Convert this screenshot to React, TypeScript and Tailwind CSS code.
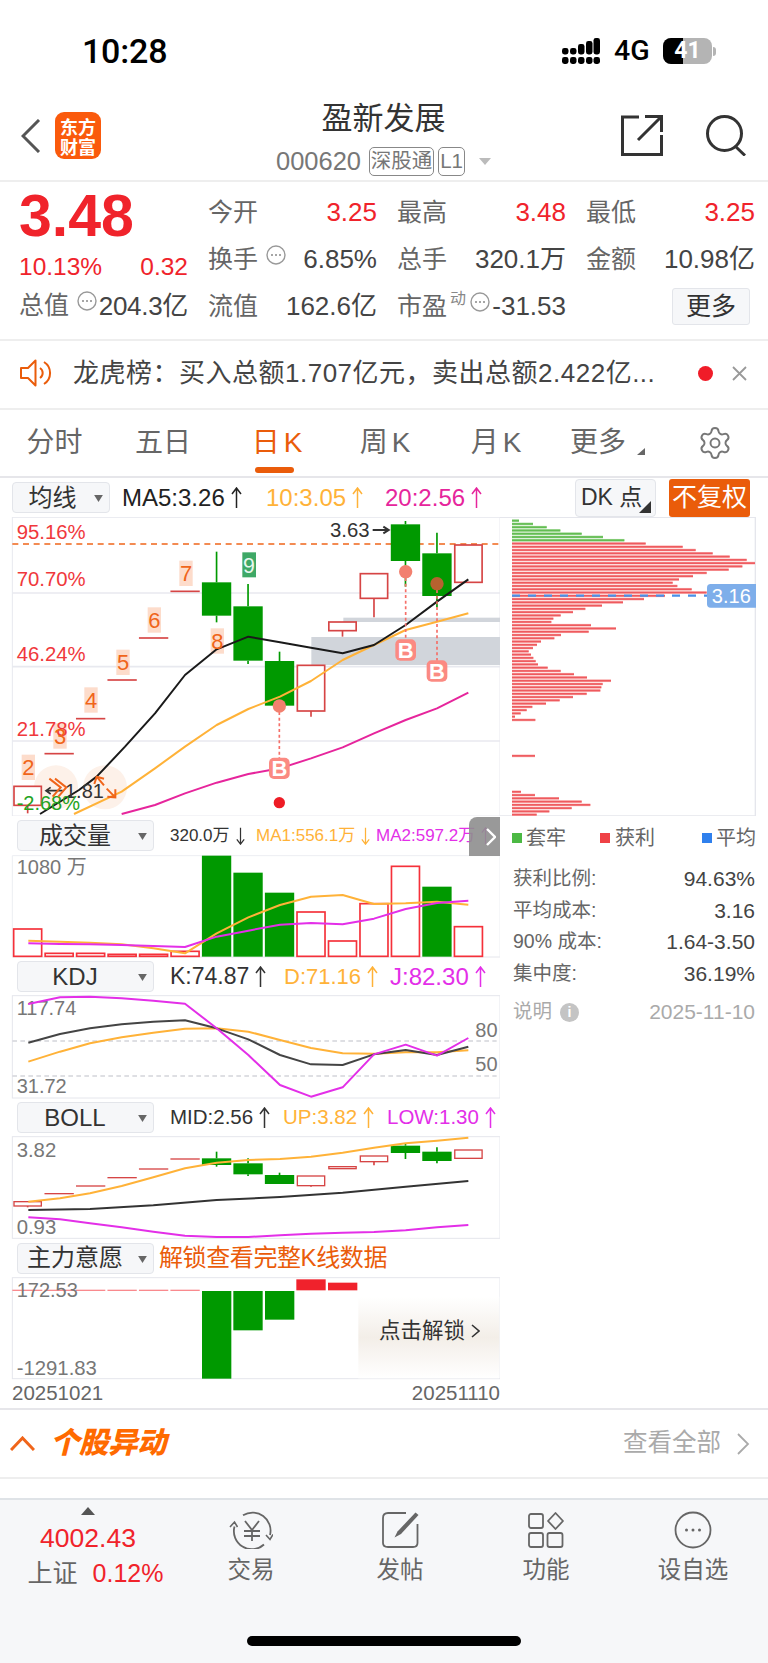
import React from 'react'
import { Settings } from 'lucide-react'

// all chart data is in 3x units: 3 svg units = 1 page pixel
const cx = (i: number) => 83 + 94.45 * i
const poly = (p: number[][]) => p.map((a) => a.join(',')).join(' ')

const RED = '#d64545'
const GREEN = '#009900'
const ORANGE = '#ffb238'
const MAGENTA = '#e32fe8'
const PINK = '#e6259c'

type Candle = { up: boolean; top: number; bottom: number; hi?: number; lo?: number }

const mainCandles: Candle[] = [
    { up: true, top: 829, bottom: 886, lo: 910 },
    { up: true, top: 731, bottom: 731 },
    { up: true, top: 626, bottom: 626 },
    { up: true, top: 510, bottom: 510 },
    { up: true, top: 384, bottom: 384 },
    { up: true, top: 244, bottom: 244 },
    { up: false, top: 217, bottom: 317, hi: 125, lo: 337 },
    { up: false, top: 289, bottom: 452, hi: 222, lo: 462 },
    { up: false, top: 453, bottom: 587, hi: 425 },
    { up: true, top: 466, bottom: 603, lo: 620 },
    { up: true, top: 336, bottom: 362, lo: 380 },
    { up: true, top: 191, bottom: 265, lo: 322 },
    { up: false, top: 43, bottom: 153, hi: 33, lo: 230 },
    { up: false, top: 130, bottom: 258, hi: 68, lo: 292 },
    { up: true, top: 105, bottom: 217 },
]

const bollCandles: Candle[] = [
    { up: true, top: 305, bottom: 318, lo: 322 },
    { up: true, top: 281, bottom: 281 },
    { up: true, top: 258, bottom: 258 },
    { up: true, top: 233, bottom: 233 },
    { up: true, top: 207, bottom: 207 },
    { up: true, top: 177, bottom: 177 },
    { up: false, top: 175, bottom: 195, hi: 155, lo: 200 },
    { up: false, top: 190, bottom: 223, hi: 175, lo: 228 },
    { up: false, top: 225, bottom: 252, hi: 218 },
    { up: true, top: 228, bottom: 257, lo: 260 },
    { up: true, top: 200, bottom: 206 },
    { up: true, top: 168, bottom: 185, lo: 196 },
    { up: false, top: 137, bottom: 159, hi: 132, lo: 177 },
    { up: false, top: 155, bottom: 183, hi: 142, lo: 190 },
    { up: true, top: 150, bottom: 175 },
]

const chipWidths = [
    57, 99, 140, 181, 245, 309, 373, 437, 548, 587, 638, 689, 740, 765, 727, 686, 620, 579, 537, 518, 532, 575, 620,
    495, 432, 369, 306, 256, 219, 182, 160, 154, 273, 348, 266, 183, 163, 123, 111, 99, 86, 93, 100, 107, 114, 143,
    182, 222, 261, 333, 308, 304, 301, 260, 219, 179, 138, 97, 80, 62, 45, 106,
]
const chipLow: Record<number, number> = { 72: 105, 83: 63, 84: 105, 85: 177, 86: 245, 87: 271, 88: 215, 89: 148, 90: 110 }

const volTops = [357, 430, 430, 433, 433, 424, 137, 188, 248, 306, 393, 281, 169, 230, 350]

function Candles({ data, width = 5 }: { data: Candle[]; width?: number }) {
    return (
        <>
            {data.map((c, i) => {
                const x = cx(i)
                const color = c.up ? RED : GREEN
                return (
                    <g key={i}>
                        {c.hi !== undefined && <line x1={x} x2={x} y1={c.hi} y2={c.top} stroke={color} strokeWidth={5} />}
                        {c.lo !== undefined && <line x1={x} x2={x} y1={c.bottom} y2={c.lo} stroke={color} strokeWidth={5} />}
                        {c.top === c.bottom ? (
                            <line x1={x - 44} x2={x + 44} y1={c.top} y2={c.top} stroke={color} strokeWidth={width} />
                        ) : c.up ? (
                            <rect x={x - 41} y={c.top} width={82} height={c.bottom - c.top} fill="#fff" stroke={color} strokeWidth={width} />
                        ) : (
                            <rect x={x - 44} y={c.top} width={88} height={c.bottom - c.top} fill={color} />
                        )}
                    </g>
                )
            })}
        </>
    )
}

function Line({ p, color, width = 6 }: { p: number[][]; color: string; width?: number }) {
    return <polyline points={poly(p)} fill="none" stroke={color} strokeWidth={width} strokeLinejoin="round" />
}

function BTag({ x, y }: { x: number; y: number }) {
    return (
        <g>
            <rect x={x - 31} y={y - 32} width={62} height={64} rx={15} fill="#fb8a82" />
            <text x={x} y={y + 24} textAnchor="middle" fontSize={66} fontWeight={700} fill="#fff">B</text>
        </g>
    )
}

function MainChart() {
    const labels = [
        [85, 772, '2'], [180, 678, '3'], [273, 570, '4'], [369, 457, '5'], [463, 330, '6'], [558, 190, '7'], [652, 393, '8'],
    ] as [number, number, string][]
    return (
        <svg viewBox="0 21 1500 897" className="block w-[500px] h-[299px]">
            <rect x={37} y={22} width={1463} height={896} fill="none" stroke="#e8e9ef" strokeWidth={3} />
            {[249, 470, 693].map((y) => (
                <line key={y} x1={37} x2={1500} y1={y} y2={y} stroke="#e8e9ef" strokeWidth={5} />
            ))}
            <rect x={934} y={381} width={566} height={84} fill="#d1d5db" />
            <rect x={1030} y={323} width={470} height={13} fill="#d1d5db" />
            <line x1={37} x2={1500} y1={102} y2={102} stroke="#f0651a" strokeWidth={5} strokeDasharray="18 14" />

            <circle cx={168} cy={832} r={66} fill="#fdf1e9" />
            <circle cx={315} cy={832} r={66} fill="#fdf1e9" />
            {labels.map(([x, y, t]) => (
                <g key={t}>
                    <rect x={x - 20} y={y - 38} width={40} height={76} fill="#fddccb" />
                </g>
            ))}
            <rect x={727} y={127} width={41} height={75} fill="#3ea866" />

            <text x={50} y={87} fontSize={61} fill="#f0383c">95.16%</text>
            <text x={50} y={229} fontSize={61} fill="#f0383c">70.70%</text>
            <text x={50} y={453} fontSize={61} fill="#f0383c">46.24%</text>
            <text x={50} y={677} fontSize={61} fill="#f0383c">21.78%</text>

            <Candles data={mainCandles} />

            <Line p={[[222,912],[365,845],[465,775],[555,710],[650,645],[745,597],[840,560],[933,513],[1028,450],[1122,405],[1217,360],[1311,335],[1405,310]]} color={ORANGE} />
            <Line p={[[365,912],[465,885],[555,850],[650,818],[745,792],[840,775],[933,745],[1028,712],[1122,670],[1217,630],[1311,595],[1405,548]]} color={PINK} />
            <Line p={[[120,912],[237,840],[290,800],[375,710],[465,610],[555,495],[650,418],[745,380],[840,397],[933,413],[1028,430],[1122,405],[1217,345],[1311,275],[1405,208]]} color="#1a1a1a" />

            {labels.map(([x, y, t]) => (
                <text key={t} x={x} y={y + 24} textAnchor="middle" fontSize={66} fill="#f0651a">{t}</text>
            ))}
            <text x={747} y={188} textAnchor="middle" fontSize={64} fill="#e8f7ee">9</text>

            <text x={195} y={864} fontSize={60} fill="#333">1.81</text>
            <path d="M188 842 H140 M152 832 L138 842 L152 852" fill="none" stroke="#333" strokeWidth={5} />
            <text x={50} y={900} fontSize={60} fill="#22a322">-2.68%</text>
            <text x={990} y={80} fontSize={61} fill="#333">3.63</text>
            <path d="M1118 60 H1162 M1150 50 L1166 60 L1150 70" fill="none" stroke="#333" strokeWidth={6} />

            <polyline points="148,806 182,832 158,860" fill="none" stroke="#f0651a" strokeWidth={6} />
            <polyline points="165,806 199,832 175,860" fill="none" stroke="#f0651a" strokeWidth={6} />
            <polyline points="283,822 290,800 312,806" fill="none" stroke="#f0651a" strokeWidth={6} />
            <line x1={290} y1={800} x2={312} y2={826} stroke="#f0651a" strokeWidth={6} />
            <polyline points="322,860 346,862 346,838" fill="none" stroke="#f0651a" strokeWidth={6} />
            <line x1={346} y1={862} x2={320} y2={836} stroke="#f0651a" strokeWidth={6} />

            <line x1={1217} x2={1217} y1={204} y2={390} stroke="#f56f68" strokeWidth={5} strokeDasharray="9 8" />
            <line x1={1311} x2={1311} y1={240} y2={452} stroke="#f56f68" strokeWidth={5} strokeDasharray="9 8" />
            <line x1={838} x2={838} y1={606} y2={745} stroke="#f56f68" strokeWidth={5} strokeDasharray="9 8" />
            <circle cx={1217} cy={185} r={20} fill="#f2806f" />
            <circle cx={1311} cy={221} r={20} fill="#b6622f" />
            <circle cx={838} cy={588} r={20} fill="#f2806f" />
            <circle cx={838} cy={878} r={17} fill="#ee1c25" />
            <BTag x={1217} y={420} />
            <BTag x={1311} y={483} />
            <BTag x={838} y={775} />
        </svg>
    )
}

function ChipChart() {
    return (
        <svg viewBox="0 21 804 897" className="block w-[268px] h-[299px]">
            <polyline points="0,22 766,22 766,918 0,918" fill="none" stroke="#e5e6ec" strokeWidth={4} />
            {chipWidths.map((w, i) => {
                const y = 32 + i * 9.8
                return <BarRow key={i} y={y} w={w} green={i < 7} />
            })}
            {Object.entries(chipLow).map(([k, w]) => (
                <BarRow key={k} y={32 + Number(k) * 9.8} w={w} green={false} />
            ))}
            <line x1={36} x2={625} y1={257} y2={257} stroke="#4a90e8" strokeWidth={7} strokeDasharray="24 24" />
            <path d="M 632 222 H 768 V 293 H 632 Q 621 293 621 282 V 233 Q 621 222 632 222 Z" fill="#7eaeea" />
            <text x={694} y={279} textAnchor="middle" fontSize={60} fill="#fff">3.16</text>
        </svg>
    )
}

function BarRow({ y, w, green }: { y: number; w: number; green: boolean }) {
    return (
        <g>
            <rect x={36} y={y - 4} width={w - 36} height={8} fill={green ? '#a9dc9e' : '#fbb4b4'} />
            <rect x={36} y={y - 2.5} width={w - 36} height={5} fill={green ? '#63bd52' : '#ee5a5e'} />
        </g>
    )
}

function VolumeChart() {
    return (
        <svg viewBox="0 135 1500 309" className="block w-[500px] h-[103px]">
            <polyline points="37,440 37,137 1500,137 1500,440" fill="none" stroke="#eceef2" strokeWidth={3} />
            <line x1={37} x2={1500} y1={441} y2={441} stroke="#e5e6ec" strokeWidth={3} />
            {volTops.map((t, i) => {
                const x = cx(i)
                const green = i >= 6 && i <= 8 || i === 13
                return green ? (
                    <rect key={i} x={x - 44} y={t} width={88} height={440 - t} fill={GREEN} />
                ) : (
                    <rect key={i} x={x - 42} y={t} width={84} height={439 - t} fill="#fff" stroke="#f5313a" strokeWidth={5} />
                )
            })}
            <Line p={[[85,392],[180,395],[270,398],[365,403],[460,415],[555,430],[650,370],[745,322],[840,285],[933,260],[1028,255],[1122,282],[1217,280],[1311,275],[1405,284]]} color={ORANGE} />
            <Line p={[[85,400],[180,402],[270,403],[365,405],[460,408],[555,411],[650,380],[745,362],[840,344],[933,339],[1028,343],[1122,326],[1217,297],[1311,279],[1405,272]]} color={MAGENTA} />
            <text x={50} y={193} fontSize={60} fill="#777">1080 万</text>
        </svg>
    )
}

function KdjChart() {
    return (
        <svg viewBox="0 555 1500 312" className="block w-[500px] h-[104px]">
            <rect x={37} y={557} width={1463} height={307} fill="none" stroke="#e5e6ec" strokeWidth={3} />
            <line x1={37} x2={1490} y1={693} y2={693} stroke="#d4d5da" strokeWidth={4} strokeDasharray="14 10" />
            <line x1={37} x2={1490} y1={798} y2={798} stroke="#d4d5da" strokeWidth={4} strokeDasharray="14 10" />
            <text x={50} y={616} fontSize={60} fill="#777">117.74</text>
            <text x={50} y={850} fontSize={60} fill="#777">31.72</text>
            <text x={1426} y={680} fontSize={60} fill="#777">80</text>
            <text x={1426} y={784} fontSize={60} fill="#777">50</text>
            <Line p={[[85,755],[180,725],[270,700],[365,682],[460,668],[555,656],[650,655],[745,665],[840,690],[933,714],[1028,730],[1122,731],[1217,727],[1311,727],[1405,721]]} color={ORANGE} />
            <Line p={[[85,698],[180,672],[270,655],[365,643],[460,635],[555,631],[650,655],[745,688],[840,735],[933,763],[1028,765],[1122,733],[1217,720],[1311,735],[1405,710]]} color="#444" />
            <Line p={[[85,582],[180,562],[270,560],[365,565],[460,572],[555,581],[650,655],[745,735],[840,825],[933,860],[1028,832],[1122,733],[1217,704],[1311,737],[1405,684]]} color={MAGENTA} />
        </svg>
    )
}

function BollChart() {
    return (
        <svg viewBox="0 108 1500 309" className="block w-[500px] h-[103px]">
            <rect x={37} y={110} width={1463} height={305} fill="none" stroke="#e5e6ec" strokeWidth={3} />
            <text x={50} y={170} fontSize={61} fill="#777">3.82</text>
            <text x={50} y={403} fontSize={61} fill="#777">0.93</text>
            <Candles data={bollCandles} width={4} />
            <Line p={[[85,305],[180,295],[270,280],[365,258],[460,232],[555,205],[650,188],[745,180],[840,177],[933,170],[1028,158],[1122,143],[1217,130],[1311,122],[1405,113]]} color={ORANGE} />
            <Line p={[[85,330],[270,327],[460,316],[650,300],[840,291],[1028,278],[1217,260],[1405,243]]} color="#333" />
            <Line p={[[85,352],[180,358],[270,370],[365,382],[460,395],[555,407],[650,411],[745,411],[840,406],[933,401],[1028,398],[1122,396],[1217,391],[1311,382],[1405,375]]} color={MAGENTA} />
        </svg>
    )
}

function IntentChart() {
    return (
        <svg viewBox="0 531 1500 309" className="block w-[500px] h-[103px]">
            <rect x={37} y={533} width={1463} height={303} fill="none" stroke="#e5e6ec" strokeWidth={3} />
            <defs>
                <linearGradient id="lock" x1="0" x2="0" y1="0" y2="1">
                    <stop offset="0" stopColor="#fff" />
                    <stop offset="0.5" stopColor="#f3eee8" />
                    <stop offset="1" stopColor="#fff" />
                </linearGradient>
            </defs>
            <rect x={1075} y={590} width={423} height={245} fill="url(#lock)" />
            {[0, 1, 2, 3, 4, 5].map((i) => (
                <line key={i} x1={i === 0 ? 37 : cx(i) - 44} x2={cx(i) + 44} y1={571} y2={571} stroke="#f98a8e" strokeWidth={4} />
            ))}
            <text x={50} y={591} fontSize={60} fill="#777">172.53</text>
            <text x={50} y={825} fontSize={61} fill="#777">-1291.83</text>
            <rect x={606} y={573} width={88} height={263} fill={GREEN} />
            <rect x={700} y={573} width={88} height={118} fill={GREEN} />
            <rect x={795} y={573} width={88} height={86} fill={GREEN} />
            <rect x={889} y={538} width={88} height={33} fill="#f0222c" />
            <rect x={984} y={548} width={88} height={23} fill="#f0222c" />
        </svg>
    )
}

function Arrow({ up = true, color, h = 22 }: { up?: boolean; color: string; h?: number }) {
    return (
        <svg viewBox="0 0 11 22" className="ml-[6px] shrink-0" style={{ width: h / 2, height: h }}>
            <path
                d={up ? 'M5.5 21 V1.5 M1 7 L5.5 1 L10 7' : 'M5.5 1 V20.5 M1 15 L5.5 21 L10 15'}
                fill="none"
                stroke={color}
                strokeWidth="1.5"
            />
        </svg>
    )
}

function Caret({ className = '' }: { className?: string }) {
    return (
        <svg viewBox="0 0 10 8" className={`w-[9px] h-[7px] ${className}`}>
            <path d="M0 0 H10 L5 8 Z" fill="#666" />
        </svg>
    )
}

function Select({ label, w = 137, pr = 21 }: { label: string; w?: number; pr?: number }) {
    return (
        <div
            className="relative flex items-center justify-center h-[31px] rounded-[4px] border border-[#e3e5ea] bg-[#f6f7f9] text-[24px] text-[#333]"
            style={{ width: w, paddingRight: pr }}
        >
            {label}
            <Caret className="absolute right-[6px] top-[12px]" />
        </div>
    )
}

function Dots({ className = '' }: { className?: string }) {
    return (
        <svg viewBox="0 0 20 20" className={`w-[20px] h-[20px] shrink-0 ${className}`}>
            <circle cx="10" cy="10" r="9" fill="none" stroke="#999" strokeWidth="1.4" />
            <circle cx="6" cy="10" r="1" fill="#888" />
            <circle cx="10" cy="10" r="1" fill="#888" />
            <circle cx="14" cy="10" r="1" fill="#888" />
        </svg>
    )
}

const quoteCols = [
    [
        { label: '今开', value: '3.25', red: true },
        { label: '换手', value: '6.85%', hint: true },
        { label: '流值', value: '162.6亿' },
    ],
    [
        { label: '最高', value: '3.48', red: true },
        { label: '总手', value: '320.1万' },
        { label: '市盈', value: '-31.53', pe: true },
    ],
    [
        { label: '最低', value: '3.25', red: true },
        { label: '金额', value: '10.98亿' },
    ],
]

function StatusBar() {
    return (
        <div className="flex items-center h-[102px] shrink-0 pl-[82px]">
            <span className="w-[87px] text-[34px] font-medium font-['Roboto'] text-black tracking-[-0.2px]">10:28</span>
            <svg viewBox="0 0 38 26" className="ml-[393px] w-[38px] h-[26px]">
                <g fill="#000">
                    <rect x="0" y="10" width="6.5" height="6.5" rx="2.4" />
                    <rect x="0" y="19" width="6.5" height="7" rx="2.4" />
                    <rect x="8" y="10" width="6.5" height="6.5" rx="2.4" />
                    <rect x="8" y="19" width="6.5" height="7" rx="2.4" />
                    <rect x="16" y="6" width="6.5" height="10.5" rx="2.4" />
                    <rect x="16" y="19" width="6.5" height="7" rx="2.4" />
                    <rect x="24" y="3" width="6.5" height="13.5" rx="2.4" />
                    <rect x="24" y="19" width="6.5" height="7" rx="2.4" />
                    <rect x="31.5" y="0" width="6.5" height="16.5" rx="2.4" />
                    <rect x="31.5" y="19" width="6.5" height="7" rx="2.4" />
                </g>
            </svg>
            <span className="ml-[14px] w-[37px] text-[28.5px] font-medium font-['Roboto'] text-black whitespace-nowrap">4G</span>
            <div className="ml-[12px] relative flex w-[49px] h-[26px] rounded-[8px] bg-[#b4b4b4]">
                <div className="w-[20px] rounded-l-[8px] bg-black" />
                <span className="absolute inset-0 flex items-center justify-center text-[23px] font-bold font-['Roboto'] text-white">41</span>
            </div>
            <div className="ml-[1px] w-[3px] h-[9px] rounded-r bg-[#b4b4b4]" />
        </div>
    )
}

function Header() {
    return (
        <div className="flex items-start h-[80px] shrink-0 border-b-2 border-[#eeeeee]">
            <div className="flex flex-1 items-center pl-[21px] pt-[10px]">
                <svg viewBox="0 0 20 34" className="w-[20px] h-[34px] mr-[14px]">
                    <polyline points="18,1 2,17 18,33" fill="none" stroke="#555" strokeWidth="3" />
                </svg>
                <div className="flex flex-col items-center justify-center w-[46px] h-[47px] rounded-[9px] bg-[#fa5a0c] text-white text-[18px] font-bold font-['Noto_Sans_CJK_SC',sans-serif]">
                    <span className="h-[20px] leading-[20px]">东方</span>
                    <span className="h-[20px] leading-[20px]">财富</span>
                </div>
            </div>
            <div className="flex flex-col items-center">
                <div className="text-[31px] leading-[34px] text-[#333]">盈新发展</div>
                <div className="flex items-center mt-[11px]">
                    <span className="text-[25.5px] leading-[29px] text-[#777]">000620</span>
                    <span className="ml-[8px] flex items-center justify-center w-[65px] h-[29px] rounded-[5px] border border-[#888] text-[20.5px] text-[#777]">深股通</span>
                    <span className="ml-[4px] flex items-center justify-center w-[27px] h-[29px] rounded-[5px] border border-[#888] text-[20.5px] text-[#777]">L1</span>
                    <svg viewBox="0 0 12 7" className="ml-[14px] w-[12px] h-[7px]">
                        <path d="M0 0 H12 L6 7 Z" fill="#bbb" />
                    </svg>
                </div>
            </div>
            <div className="flex flex-1 justify-end pt-[13px] pr-[22px]">
                <svg viewBox="0 0 42 41" className="w-[42px] h-[41px]">
                    <path d="M18 2 H1.5 V39.5 H40.5 V20" fill="none" stroke="#333" strokeWidth="3" />
                    <path d="M17 25 L39 3 M24 1.5 H40.5 V17" fill="none" stroke="#333" strokeWidth="3" />
                </svg>
                <svg viewBox="0 0 40 41" className="ml-[43px] w-[40px] h-[41px]">
                    <circle cx="18.5" cy="18.5" r="17" fill="none" stroke="#333" strokeWidth="3" />
                    <path d="M29 31 L39 40.5" fill="none" stroke="#333" strokeWidth="3" />
                </svg>
            </div>
        </div>
    )
}

function Quote() {
    return (
        <div className="flex h-[159px] shrink-0 border-b-2 border-[#eeeeee] pl-[19px] pt-[7px] gap-[20px]">
            <div className="w-[169px] shrink-0 flex flex-col">
                <div className="h-[54px] flex items-center text-[59px] font-bold text-[#f0232b]">3.48</div>
                <div className="h-[48px] flex items-center justify-between text-[24.5px] text-[#f0232b]">
                    <span>10.13%</span>
                    <span>0.32</span>
                </div>
                <div className="h-[30px] flex items-center text-[25px] text-[#666]">
                    总值
                    <Dots className="ml-[8px] mb-[10px]" />
                    <span className="ml-auto text-[26px] text-[#444] tracking-[-0.3px]">204.3亿</span>
                </div>
            </div>
            {quoteCols.map((col, c) => (
                <div key={c} className="w-[169px] shrink-0 flex flex-col">
                    {col.map((r) => (
                        <div key={r.label} className="h-[47px] flex items-center text-[25px] text-[#666]">
                            {r.label}
                            {r.hint && <Dots className="ml-[8px] mb-[10px]" />}
                            {r.pe && <span className="ml-[3px] mb-[16px] text-[16px] text-[#888]">动</span>}
                            {r.pe && <Dots className="ml-[4px] mb-[10px]" />}
                            <span className={`ml-auto text-[26px] ${r.red ? 'text-[#f0232b]' : 'text-[#444]'}`}>{r.value}</span>
                        </div>
                    ))}
                    {c === 2 && (
                        <div className="h-[47px] flex items-center justify-end pr-[5px]">
                            <div className="flex items-center justify-center w-[78px] h-[37px] rounded-[3px] border border-[#e3e5ea] bg-[#f6f7f9] text-[25px] text-[#333]">更多</div>
                        </div>
                    )}
                </div>
            ))}
        </div>
    )
}

function Notice() {
    return (
        <div className="flex items-center h-[69px] shrink-0 border-b-2 border-[#eeeeee] pb-[3px] pl-[20px]">
            <svg viewBox="0 0 32 28" className="w-[32px] h-[28px]">
                <path d="M1 9 H8 L15.5 1.5 V26.5 L8 19 H1 Z" fill="none" stroke="#ea5c0a" strokeWidth="2" strokeLinejoin="round" />
                <path d="M20 9 A6 6 0 0 1 20 19" fill="none" stroke="#ea5c0a" strokeWidth="2" />
                <path d="M24 3 A13 13 0 0 1 24 25" fill="none" stroke="#ea5c0a" strokeWidth="2" />
            </svg>
            <span className="ml-[21px] w-[612px] whitespace-nowrap text-[26px] tracking-[0.5px] text-[#444]">{'龙虎榜\uFF1A买入总额1.707亿元\uFF0C卖出总额2.422亿...'}</span>
            <span className="ml-[13px] w-[15px] h-[15px] rounded-full bg-[#f01c28]" />
            <svg viewBox="0 0 15 15" className="ml-[19px] w-[15px] h-[15px]">
                <path d="M1 1 L14 14 M14 1 L1 14" stroke="#999" strokeWidth="1.8" />
            </svg>
        </div>
    )
}

const tabs = [
    { label: '分时', w: 'w-[109px]' },
    { label: '五日', w: 'w-[108px]' },
    { label: '日', k: true, w: 'w-[120px]', active: true },
    { label: '周', k: true, w: 'w-[96px]' },
    { label: '月', k: true, w: 'w-[126px]' },
    { label: '更多', w: 'w-[78px]' },
]

function Tabs() {
    return (
        <div className="flex items-center h-[68px] shrink-0 border-b-2 border-[#e6e6ea]">
            {tabs.map((t) => (
                <div key={t.label} className={`relative flex h-full items-center justify-center text-[28px] ${t.w} ${t.active ? 'text-[#ea5c0a]' : 'text-[#666]'}`}>
                    {t.label}
                    {t.k && <span className="ml-[4px]">K</span>}
                    {t.active && <div className="absolute bottom-[3px] left-[38px] w-[39px] h-[6px] rounded-full bg-[#ea5c0a]" />}
                </div>
            ))}
            <svg viewBox="0 0 8 7" className="mt-[16px] w-[8px] h-[7px]">
                <path d="M8 0 V7 H0 Z" fill="#666" />
            </svg>
            <Settings className="ml-[52px] w-[36px] h-[36px] text-[#777]" strokeWidth={1.3} />
        </div>
    )
}

function MainToolbar() {
    return (
        <div className="flex items-center h-[39px] shrink-0 pl-[12px]">
            <Select label="均线" w={98} pr={17} />
            <div className="flex items-center ml-[12px] text-[24px] whitespace-nowrap">
                <span className="flex items-center w-[144px] text-[#222]">MA5:3.26<Arrow color="#222" /></span>
                <span className="flex items-center w-[119px] text-[#ffb238]">10:3.05<Arrow color="#ffb238" /></span>
                <span className="flex items-center w-[102px] text-[#e6259c]">20:2.56<Arrow color="#e6259c" /></span>
            </div>
            <div className="relative ml-[88px] flex items-center justify-start pl-[5px] w-[81px] h-[38px] rounded-[4px] border border-[#e3e5ea] bg-[#f6f7f9] text-[23px] text-[#333] whitespace-nowrap">
                DK 点
                <svg viewBox="0 0 12 12" className="absolute right-[4px] bottom-[3px] w-[12px] h-[12px]">
                    <path d="M12 0 V12 H0 Z" fill="#333" />
                </svg>
            </div>
            <div className="ml-[13px] flex items-center justify-center w-[81px] h-[38px] rounded-[3px] bg-[#ea5c0a] text-[25px] text-white">不复权</div>
        </div>
    )
}

function Toolbar({ label, h, children }: { label: string; h: number; children: React.ReactNode }) {
    return (
        <div className="relative flex items-center pl-[17px] whitespace-nowrap" style={{ height: h }}>
            <Select label={label} />
            {children}
        </div>
    )
}

function Footer() {
    const labelCls = 'mt-[6px] text-[23.5px] leading-[30px] text-[#666]'
    return (
        <div className="flex-1 flex flex-col border-t-2 border-[#dfe3e7] bg-[#f6f7f9]">
            <div className="flex pt-[7px]">
                <div className="w-[176px] flex flex-col items-center">
                    <svg viewBox="0 0 14 8" className="w-[14px] h-[8px]">
                        <path d="M7 0 L14 8 H0 Z" fill="#555" />
                    </svg>
                    <div className="mt-[9px] text-[26.5px] leading-[28px] text-[#f0232b]">4002.43</div>
                    <div className="mt-[6px] flex items-center leading-[30px] pl-[15px]">
                        <span className="text-[25px] text-[#666]">上证</span>
                        <span className="ml-[15px] text-[25px] text-[#f0232b]">0.12%</span>
                    </div>
                </div>
                <div className="w-[150px] flex flex-col items-center pt-[4px]">
                    <svg viewBox="0 0 44 38" className="w-[44px] h-[38px]">
                        <path d="M5.5 15.5 A18 18 0 0 0 35 33.5 M14 4.3 A18 18 0 0 1 41 24" fill="none" stroke="#666" strokeWidth="1.8" />
                        <path d="M1 16 L5.5 11 L8.5 16 M37 24 L41 28.5 L44 23.5" fill="none" stroke="#666" strokeWidth="1.6" />
                        <path d="M16 10 L23 19 L30 10 M23 19 V30 M15 20 H31 M15 25 H31" fill="none" stroke="#666" strokeWidth="1.8" />
                    </svg>
                    <span className={labelCls}>交易</span>
                </div>
                <div className="w-[148px] flex flex-col items-center pt-[4px]">
                    <svg viewBox="0 0 37 38" className="w-[37px] h-[38px]">
                        <path d="M24 2 H6 Q1 2 1 7 V32 Q1 36 6 36 H31 Q35.5 36 35.5 32 V13" fill="none" stroke="#666" strokeWidth="1.8" />
                        <path d="M33.5 1.5 L36.5 4 L19 23 L12.5 26.5 L15.5 20.5 Z" fill="#666" />
                    </svg>
                    <span className={labelCls}>发帖</span>
                </div>
                <div className="w-[144px] flex flex-col items-center pt-[4px]">
                    <svg viewBox="0 0 36 36" className="w-[36px] h-[38px]">
                        <g fill="none" stroke="#666" strokeWidth="1.8">
                            <rect x="1" y="2" width="14" height="14" rx="2" />
                            <rect x="1" y="21" width="14" height="14" rx="2" />
                            <rect x="19.5" y="21" width="15" height="14" rx="2" />
                            <path d="M27.5 1 L35 9 L27.5 17 L20 9 Z" strokeLinejoin="round" />
                        </g>
                    </svg>
                    <span className={labelCls}>功能</span>
                </div>
                <div className="w-[150px] flex flex-col items-center pt-[4px]">
                    <svg viewBox="0 0 38 38" className="w-[38px] h-[38px]">
                        <circle cx="19" cy="19" r="17.5" fill="none" stroke="#666" strokeWidth="1.8" />
                        <circle cx="12.5" cy="19" r="1.5" fill="#666" />
                        <circle cx="19" cy="19" r="1.5" fill="#666" />
                        <circle cx="25.5" cy="19" r="1.5" fill="#666" />
                    </svg>
                    <span className={labelCls}>设自选</span>
                </div>
            </div>
            <div className="mt-auto mb-[17px] mx-auto w-[274px] h-[10px] rounded-full bg-black" />
        </div>
    )
}

export default function App() {
    return (
        <div className="w-[768px] h-[1663px] flex flex-col overflow-hidden bg-white font-['Liberation_Sans','Noto_Sans_CJK_SC',sans-serif]">
            <StatusBar />
            <Header />
            <Quote />
            <Notice />
            <Tabs />
            <MainToolbar />

            <div className="flex h-[893px] shrink-0 border-b-2 border-[#e6e6ea]">
                <div className="w-[500px] shrink-0">
                    <MainChart />
                    <Toolbar label="成交量" h={39}>
                        <div className="flex items-center ml-[16px] text-[17px]">
                            <span className="flex items-center w-[86px] text-[#333]">320.0万<Arrow up={false} color="#333" h={18} /></span>
                            <span className="flex items-center w-[120px] text-[#ffb238]">MA1:556.1万<Arrow up={false} color="#ffb238" h={18} /></span>
                            <span className="flex items-center text-[#e32fe8]">MA2:597.2万<Arrow color="#e32fe8" h={18} /></span>
                        </div>
                        <div className="absolute right-0 top-[1px] flex items-center justify-center w-[31px] h-[39px] rounded-tl-[8px] bg-[#8e8e8e]/90">
                            <svg viewBox="0 0 10 18" className="w-[10px] h-[18px] ml-[12px]">
                                <polyline points="1,1 9,9 1,17" fill="none" stroke="#fff" strokeWidth="2.4" />
                            </svg>
                        </div>
                    </Toolbar>
                    <VolumeChart />
                    <Toolbar label="KDJ" h={37}>
                        <div className="flex items-center ml-[16px]">
                            <span className="flex items-center w-[114px] text-[23px] text-[#333]">K:74.87<Arrow color="#333" /></span>
                            <span className="flex items-center w-[106px] text-[22px] text-[#ffb238]">D:71.16<Arrow color="#ffb238" /></span>
                            <span className="flex items-center text-[24px] text-[#e32fe8]">J:82.30<Arrow color="#e32fe8" /></span>
                        </div>
                    </Toolbar>
                    <KdjChart />
                    <Toolbar label="BOLL" h={37}>
                        <div className="flex items-center ml-[16px] text-[20.5px]">
                            <span className="flex items-center w-[113px] text-[#333]">MID:2.56<Arrow color="#333" /></span>
                            <span className="flex items-center w-[104px] text-[#ffb238]">UP:3.82<Arrow color="#ffb238" /></span>
                            <span className="flex items-center text-[#e32fe8]">LOW:1.30<Arrow color="#e32fe8" /></span>
                        </div>
                    </Toolbar>
                    <BollChart />
                    <Toolbar label="主力意愿" h={38}>
                        <span className="ml-[5px] text-[24px] text-[#ea5c0a] tracking-[-0.4px]">解锁查看完整K线数据</span>
                        <div className="absolute right-[20px] top-[76px] z-10 flex items-center text-[21.5px] text-[#333]">
                            点击解锁
                            <svg viewBox="0 0 9 14" className="ml-[6px] w-[9px] h-[14px]">
                                <polyline points="1,1 8,7 1,13" fill="none" stroke="#333" strokeWidth="1.6" />
                            </svg>
                        </div>
                    </Toolbar>
                    <IntentChart />
                    <div className="flex items-center justify-between pl-[12px] h-[27px] text-[20.5px] text-[#666]">
                        <span>20251021</span>
                        <span>20251110</span>
                    </div>
                </div>

                <div className="w-[268px] shrink-0">
                    <ChipChart />
                    <div className="flex items-center h-[44px] pl-[12px] text-[20px] text-[#666]">
                        <span className="w-[10px] h-[10px] bg-[#4cb944]" />
                        <span className="ml-[4px] w-[74px]">套牢</span>
                        <span className="w-[10px] h-[10px] bg-[#ef4146]" />
                        <span className="ml-[5px] w-[87px]">获利</span>
                        <span className="w-[10px] h-[10px] bg-[#2f80ed]" />
                        <span className="ml-[4px]">平均</span>
                    </div>
                    <div className="mt-[3px] pl-[13px] pr-[13px] text-[#555]">
                        {[
                            ['获利比例:', '94.63%'],
                            ['平均成本:', '3.16'],
                            ['90% 成本:', '1.64-3.50'],
                            ['集中度:', '36.19%'],
                        ].map(([k, v]) => (
                            <div key={k} className="flex items-center justify-between h-[31.5px]">
                                <span className="text-[19.5px] text-[#666]">{k}</span>
                                <span className="text-[21px] text-[#444]">{v}</span>
                            </div>
                        ))}
                        <div className="mt-[7px] flex items-center h-[32px] text-[#aaa]">
                            <span className="text-[19.5px]">说明</span>
                            <span className="ml-[8px] flex items-center justify-center w-[19px] h-[19px] rounded-full bg-[#c4c4c4] text-[14px] font-bold text-white">i</span>
                            <span className="ml-auto text-[21px]">2025-11-10</span>
                        </div>
                    </div>
                </div>
            </div>

            <div className="flex items-center h-[69px] shrink-0 border-b-2 border-[#eeeeee]">
                <svg viewBox="0 0 25 15" className="ml-[10px] w-[25px] h-[15px]">
                    <polyline points="1,14 12.5,2 24,14" fill="none" stroke="#f0651a" strokeWidth="3" />
                </svg>
                <span className="ml-[15px] text-[29.5px] font-black italic text-[#ff6a00] tracking-[-0.5px]">个股异动</span>
                <span className="ml-auto text-[24.5px] text-[#aaa]">查看全部</span>
                <svg viewBox="0 0 13 22" className="ml-[16px] mr-[18px] w-[13px] h-[22px]">
                    <polyline points="1,1 11,11 1,21" fill="none" stroke="#aaa" strokeWidth="1.8" />
                </svg>
            </div>
            <div className="h-[19px] shrink-0" />
            <Footer />
        </div>
    )
}
